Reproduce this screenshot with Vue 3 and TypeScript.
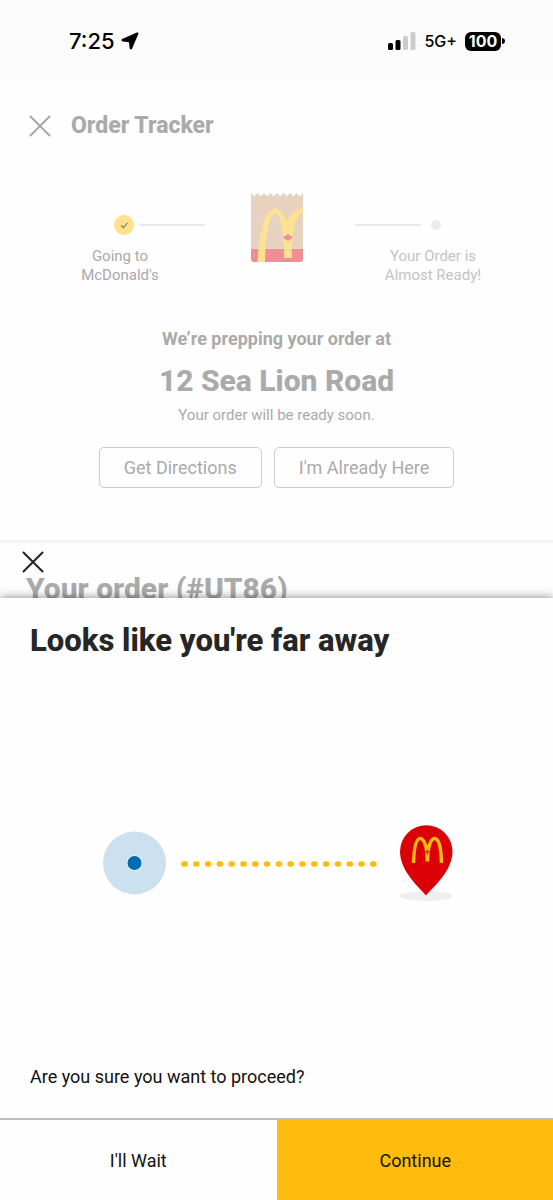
<script setup lang="ts">
import { ref } from 'vue'

const time = ref('7:25')
const battery = ref(100)
const network = ref('5G+')
const orderCode = ref('#UT86')
const address = ref('12 Sea Lion Road')
</script>

<template>
  <div class="screen">
    <div class="status">
      <div class="status-time">
        <span>{{ time }}</span>
        <svg width="18" height="18" viewBox="0 0 18 18" aria-hidden="true">
          <path d="M1.200 7 15.800.6c1-.5 1.900.3 1.500 1.300l-6.300 14.800c-.5 1.200-2.300.9-2.400-.4L8 10.200 1.900 9.400C.2 9.200-.1 7.600 1.200 7z" />
        </svg>
      </div>
      <div class="status-info">
        <svg width="28" height="18" viewBox="0 0 28 18" aria-hidden="true">
          <rect x="0" y="11" width="5" height="7" rx="1.500" />
          <rect x="7.500" y="8" width="5" height="10" rx="1.500" />
          <rect x="15" y="4" width="5" height="14" rx="1.500" fill="#ccc" />
          <rect x="22.500" y="0" width="5" height="18" rx="1.500" fill="#ccc" />
        </svg>
        <span class="network">{{ network }}</span>
        <div class="battery">
          <span class="battery-level">{{ battery }}</span>
          <svg width="3" height="6" viewBox="0 0 3 6" aria-hidden="true"><path d="M0 0q3 .5 3 3t-3 3z" /></svg>
        </div>
      </div>
    </div>

    <main class="tracker">
      <header class="tracker-head">
        <button type="button" class="icon-button" aria-label="Close order tracker">
          <svg width="22" height="22" viewBox="0 0 22 22" aria-hidden="true">
            <path d="M1.500 1.500l19 19M20.500 1.500l-19 19" fill="none" stroke="#a6a6a6" stroke-width="2" stroke-linecap="round" />
          </svg>
        </button>
        <h1>Order Tracker</h1>
      </header>

      <div class="steps">
        <div class="step-track done">
          <svg width="20" height="20" viewBox="0 0 20 20" aria-hidden="true">
            <circle cx="10" cy="10" r="10" fill="#ffe08c" />
            <path d="M7 10.300l2.400 2.500 4-5" fill="none" stroke="#8e8767" stroke-width="1.300" />
          </svg>
          <span class="line"></span>
        </div>
        <svg class="bag" width="52" height="70" viewBox="0 0 52 70" aria-hidden="true">
          <path d="M0 0l3.250 3.500L6.500 0l3.250 3.500L13 0l3.250 3.500L19.500 0l3.250 3.500L26 0l3.250 3.500L32.500 0l3.250 3.500L39 0l3.250 3.500L45.500 0l3.250 3.500L52 0v56H0z" fill="#e6d2be" />
          <path d="M0 56h52v10q0 3-3 3H3q-3 0-3-3z" fill="#f08e96" />
          <path d="M6.700 69C8 42 13 15.500 24.300 15.500C29 15.500 33 22 35.500 29C39 21 45 15.500 52 15.500V20C45 21 41 36 40.700 65H33.300C33 38 29 20.300 24.300 20.300C18.500 20.300 14.500 42 14 69z" fill="#ffe291" />
          <path d="M37 40.500l1.200 1.800 1-.4-.1 1.900 1.500-.9 1.200.9-.4 1.200-2.700 1.900-1.200-.1V49h-1v-2.200l-1.200.1-2.700-1.900-.4-1.200 1.200-.9 1.500.9-.1-1.900 1 .4z" fill="#f08e96" />
        </svg>
        <div class="step-track next">
          <span class="line"></span>
          <span class="dot"></span>
        </div>
      </div>
      <div class="step-labels">
        <p>Going to<br />McDonald's</p>
        <p class="upcoming">Your Order is<br />Almost Ready!</p>
      </div>

      <p class="prepping">We’re prepping your order at</p>
      <h2>{{ address }}</h2>
      <p class="ready">Your order will be ready soon.</p>

      <div class="actions">
        <button type="button">Get Directions</button>
        <button type="button">I'm Already Here</button>
      </div>
    </main>

    <section class="order">
      <button type="button" class="icon-button sheet-close" aria-label="Close dialog">
        <svg width="22" height="22" viewBox="0 0 22 22" aria-hidden="true">
          <path d="M1.500 1.500l19 19M20.500 1.500l-19 19" fill="none" stroke="#222" stroke-width="2" stroke-linecap="round" />
        </svg>
      </button>
      <h2>Your order ({{ orderCode }})</h2>
    </section>

    <section class="sheet" role="dialog" aria-labelledby="sheet-title">
      <h2 id="sheet-title">Looks like you're far away</h2>
      <div class="distance">
        <svg width="352" height="80" viewBox="-2 -2 352 80" aria-hidden="true">
          <circle cx="31.500" cy="39" r="31.500" fill="#cce1f0" />
          <circle cx="31.500" cy="39" r="8" fill="#e3f0f8" />
          <circle cx="31.500" cy="39" r="7" fill="#006bae" />
          <path d="M81 40H275" fill="none" stroke="#ffbc0d" stroke-width="5.600" stroke-linecap="round" stroke-dasharray="1 10.800" />
          <ellipse cx="323" cy="72" rx="26.500" ry="5" fill="#efefef" />
          <path d="M323 71.500C318 65 297 48 297 27.500a26 26 0 0 1 52.500 0C349.500 48 328 65 323 71.500z" fill="#db0007" />
          <path d="M310.500 39C311 24 313 14.500 317.200 14.500c4.200 0 7.200 10 7.200 23 0-13 3-23 7.200-23 4.300 0 6.600 9.500 6.800 24.500" fill="none" stroke="#ffbc0d" stroke-width="3.400" />
          <path d="M322.700 27h3.400v10h-3.400z" fill="#ffbc0d" />
          <path d="M324.400 25.500l1 1.300 1.200.2-.4 1.800-1.300.7v1.500h-1v-1.500l-1.300-.7-.4-1.800 1.200-.2z" fill="#b84a08" />
        </svg>
      </div>
      <p>Are you sure you want to proceed?</p>
      <div class="sheet-actions">
        <button type="button">I'll Wait</button>
        <button type="button" class="primary">Continue</button>
      </div>
    </section>
  </div>
</template>

<style>
body {
  margin: 0;
  background: #fefefe;
}
</style>

<style scoped>
.screen {
  display: flex;
  flex-direction: column;
  min-height: 100vh;
  font-family: Roboto, "Liberation Sans", sans-serif;
  color: #aaa;
}

h1,
h2,
p {
  margin: 0;
}

h1,
h2 {
  font-weight: 800;
}

svg {
  display: block;
  flex: none;
}

button {
  font: inherit;
  color: inherit;
  margin: 0;
  padding: 0;
  border: 0;
  background: none;
  cursor: pointer;
}

.status {
  display: flex;
  justify-content: space-between;
  align-items: center;
  box-sizing: border-box;
  height: 78px;
  padding: 4px 48px 0 69px;
  background: #fcfcfc;
  font-family: Inter, sans-serif;
  color: #000;
}

.status-time,
.status-info,
.battery {
  display: flex;
  align-items: center;
}

.status-time {
  gap: 6px;
  font-size: 22px;
  font-weight: 500;
}

.status-info {
  gap: 8px;
}

.network {
  font-size: 16px;
  font-weight: 500;
}

.battery {
  gap: 1px;
}

.battery-level {
  width: 36px;
  border-radius: 6px;
  background: #000;
  color: #fff;
  font-size: 16px;
  font-weight: 700;
  line-height: 19px;
  text-align: center;
}

.tracker {
  display: flex;
  flex-direction: column;
  padding-bottom: 52px;
  border-bottom: 3px solid #f5f5f5;
  text-align: center;
}

.tracker-head {
  display: flex;
  align-items: center;
  gap: 20px;
  padding: 32px 29px 0;
}

.tracker-head h1 {
  font-size: 23px;
  line-height: 32px;
}

.steps {
  display: grid;
  grid-template-columns: 1fr 52px 1fr;
  padding-top: 51px;
}

.step-track {
  display: flex;
  align-items: center;
  height: 64px;
}

.done {
  justify-content: flex-end;
  gap: 5px;
  padding-right: 46px;
}

.next {
  gap: 10px;
  padding-left: 52px;
}

.line {
  width: 66px;
  height: 2px;
  background: #e9e9e9;
}

.dot {
  width: 10px;
  height: 10px;
  border-radius: 50%;
  background: #ebebeb;
}

.step-labels {
  display: flex;
  justify-content: space-between;
  margin-top: -16px;
  padding: 0 65px;
  font-size: 15px;
  line-height: 19px;
}

.step-labels p {
  width: 110px;
}

.step-labels .upcoming {
  color: #c4c4c4;
}

.prepping {
  margin-top: 42px;
  font-size: 18px;
  font-weight: 700;
  line-height: 24px;
}

.tracker h2 {
  margin-top: 12px;
  font-size: 30px;
  line-height: 36px;
}

.ready {
  margin-top: 6px;
  font-size: 15px;
  line-height: 20px;
}

.actions {
  display: flex;
  justify-content: center;
  gap: 12px;
  margin-top: 22px;
}

.actions button {
  height: 41px;
  padding: 0 24px;
  border: 1px solid #ccc;
  border-radius: 5px;
  font-size: 18px;
}

.order {
  height: 55px;
  padding: 0 26px;
  position: relative;
}

.sheet-close {
  position: absolute;
  left: 22px;
  top: 8px;
}

.order h2 {
  padding-top: 28px;
  font-size: 30px;
  line-height: 36px;
}

.sheet {
  position: relative;
  display: flex;
  flex: 1;
  flex-direction: column;
  background: #fefefe;
  box-shadow: 0 0 9px rgba(0, 0, 0, 0.5);
  color: #111;
}

.sheet h2 {
  padding: 25px 30px 0;
  font-size: 31px;
  line-height: 36px;
  color: #262626;
}

.distance {
  display: flex;
  flex: 1;
  align-items: center;
  justify-content: center;
}

.sheet p {
  padding: 0 30px 29px;
  font-size: 18px;
  line-height: 24px;
}

.sheet-actions {
  display: grid;
  grid-template-columns: 1fr 1fr;
  height: 80px;
  border-top: 2px solid #bdbdbd;
}

.sheet-actions button {
  font-size: 18px;
}

.sheet-actions .primary {
  border-left: 1px solid #bdbdbd;
  background: #ffbc0d;
}
</style>
